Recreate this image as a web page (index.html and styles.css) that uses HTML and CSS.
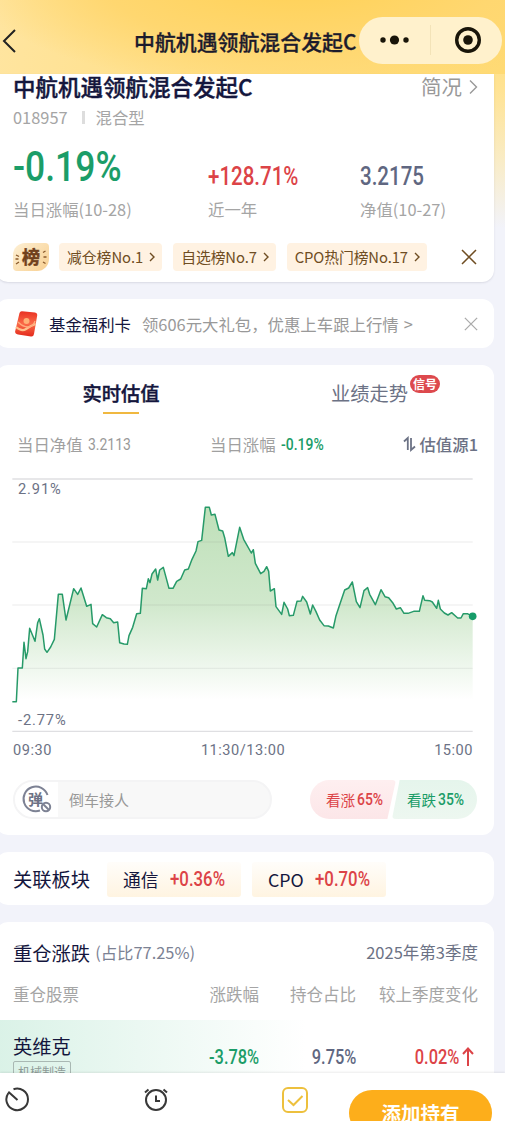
FILE: index.html
```
<!DOCTYPE html>
<html lang="zh-CN">
<head>
    <meta charset="UTF-8">
    <meta name="viewport" content="width=device-width, initial-scale=1.0">
    <title>中航机遇领航混合发起C</title>
    <link rel="stylesheet" href="styles.css">
</head>
<body>
    <header class="header">
        <svg class="back" width="16" height="26" viewBox="0 0 16 26"><path d="M14 2 3 13 14 24"/></svg>
        <h1>中航机遇领航混合发起C</h1>
        <div class="capsule">
            <svg width="142" height="46" viewBox="0 0 142 46">
                <circle cx="24" cy="23" r="2.7"/>
                <circle cx="35.5" cy="23" r="4.6"/>
                <circle cx="47" cy="23" r="2.7"/>
                <path class="split" d="M71.500 8V38"/>
                <circle class="ring" cx="109" cy="23" r="11.300"/>
                <circle cx="109" cy="23" r="4.800"/>
            </svg>
        </div>
    </header>

    <section class="card summary">
        <div class="fund-title">
            <h2>中航机遇领航混合发起C</h2>
            <a class="more">简况<svg width="9" height="16" viewBox="0 0 9 16"><path d="M1 1.500 7.500 8 1 14.500"/></svg></a>
        </div>
        <div class="fund-code"><span>018957</span><i></i><span>混合型</span></div>
        <div class="figures">
            <div>
                <div class="value"><b class="num big green">-0.19%</b></div>
                <p>当日涨幅(10-28)</p>
            </div>
            <div>
                <div class="value"><b class="num mid red">+128.71%</b></div>
                <p>近一年</p>
            </div>
            <div>
                <div class="value"><b class="num mid slate">3.2175</b></div>
                <p>净值(10-27)</p>
            </div>
        </div>
        <div class="ranks">
            <span class="rank-icon">
                <svg width="36" height="28" viewBox="0 0 36 28">
                    <path d="M3 12 6 13.500M2.500 16H5.500M3 21 6 19M30 9.500 32.500 8M30.500 14H33.500M30 19 32.500 20.500"/>
                    <text x="18" y="21">榜</text>
                </svg>
            </span>
            <a class="rank">减仓榜No.1<svg width="6" height="10" viewBox="0 0 6 10"><path d="M1 1 5 5 1 9"/></svg></a>
            <a class="rank">自选榜No.7<svg width="6" height="10" viewBox="0 0 6 10"><path d="M1 1 5 5 1 9"/></svg></a>
            <a class="rank">CPO热门榜No.17<svg width="6" height="10" viewBox="0 0 6 10"><path d="M1 1 5 5 1 9"/></svg></a>
            <svg class="close brown" width="16" height="16" viewBox="0 0 16 16"><path d="M1 1 15 15M15 1 1 15"/></svg>
        </div>
    </section>

    <section class="card promo">
        <svg class="packet" width="26" height="28" viewBox="0 0 26 28">
            <defs>
                <linearGradient id="packet" x1="0" y1="0" x2="0" y2="1">
                    <stop offset="0" stop-color="#e93223"/>
                    <stop offset=".5" stop-color="#fa6a48"/>
                    <stop offset="1" stop-color="#e32a1c"/>
                </linearGradient>
            </defs>
            <path fill="url(#packet)" d="M6.500 3Q7.200 1 9 1.200L22 2.500Q24.500 3 24.200 5.500L21 24Q20.500 26.800 18 26.500L5 24.500Q2 23.800 2.100 21.500Z"/>
            <path fill="none" stroke="#ffc08c" stroke-width="2.200" d="M3 17Q9 22 13 19T22.500 14"/>
            <circle cx="13.500" cy="11" r="3" fill="#ffb076"/>
            <path fill="none" stroke="#ffab7d" stroke-width="1.300" d="M5 12Q10 17 15 17T22 11"/>
        </svg>
        <span class="promo-name">基金福利卡</span>
        <span class="promo-text">领606元大礼包，优惠上车跟上行情<em>&gt;</em></span>
        <svg class="close grey" width="14" height="14" viewBox="0 0 16 16"><path d="M1 1 15 15M15 1 1 15"/></svg>
    </section>

    <section class="card trend">
        <div class="tabs">
            <div class="tab active">实时估值</div>
            <div class="tab">业绩走势<span class="badge">信号</span></div>
        </div>
        <div class="stats">
            <span class="stat">当日净值<b class="num small light">3.2113</b></span>
            <span class="stat">当日涨幅<b class="num small green">-0.19%</b></span>
            <span class="source"><svg width="13" height="16" viewBox="0 0 13 16"><path d="M1 5.500 4.800 2V14M8 2V14L12 10.500"/></svg>估值源1</span>
        </div>
        <svg class="chart" width="490" height="265" viewBox="0 0 1470 795">
            <defs>
                <linearGradient id="area" gradientUnits="userSpaceOnUse" x1="0" y1="110" x2="0" y2="690">
                    <stop offset="0" stop-color="#bfe0b9"/>
                    <stop offset=".5" stop-color="#d0e8cc"/>
                    <stop offset="1" stop-color="#fff"/>
                </linearGradient>
            </defs>
            <path class="edge" d="M37 27H1418M37 784H1418"/>
            <path fill="url(#area)" d="M37 695 49 695 54 594 67 594 72 517 78 566 83 545 89 475 105 514 113 458 118 446 129 495 134 537 141 547 152 531 163 508 175 373 187 373 198 450 221 356 233 373 243 354 260 409 273 403 278 461 290 471 307 434 319 443 331 446 341 458 353 456 359 518 372 522 382 523 387 497 398 472 410 431 421 430 427 355 439 356 445 326 450 338 456 312 467 297 473 330 479 300 490 292 507 355 519 355 530 334 542 327 554 300 565 297 576 268 588 243 594 215 605 211 616 112 628 112 634 135 645 133 657 180 668 183 674 203 685 259 697 248 702 257 719 172 731 208 754 249 760 239 766 280 782 311 792 304 800 290 806 304 811 363 823 356 828 410 845 433 852 397 863 417 868 437 880 436 891 394 903 393 908 379 920 396 931 432 938 405 948 425 959 450 972 467 985 468 1000 474 1008 437 1017 410 1034 360 1046 354 1057 336 1069 395 1080 413 1092 362 1103 353 1109 373 1126 404 1143 359 1155 380 1166 383 1178 398 1189 417 1201 413 1212 430 1224 430 1241 424 1258 424 1269 377 1274 391 1289 392 1297 396 1310 415 1315 391 1321 417 1333 429 1344 435 1355 428 1373 444 1383 444 1390 431 1402 431 1418 439V695Z"/>
            <path class="grid" d="M37 216H1418M37 405H1418M37 595H1418"/>
            <path class="line" d="M37 695 49 695 54 594 67 594 72 517 78 566 83 545 89 475 105 514 113 458 118 446 129 495 134 537 141 547 152 531 163 508 175 373 187 373 198 450 221 356 233 373 243 354 260 409 273 403 278 461 290 471 307 434 319 443 331 446 341 458 353 456 359 518 372 522 382 523 387 497 398 472 410 431 421 430 427 355 439 356 445 326 450 338 456 312 467 297 473 330 479 300 490 292 507 355 519 355 530 334 542 327 554 300 565 297 576 268 588 243 594 215 605 211 616 112 628 112 634 135 645 133 657 180 668 183 674 203 685 259 697 248 702 257 719 172 731 208 754 249 760 239 766 280 782 311 792 304 800 290 806 304 811 363 823 356 828 410 845 433 852 397 863 417 868 437 880 436 891 394 903 393 908 379 920 396 931 432 938 405 948 425 959 450 972 467 985 468 1000 474 1008 437 1017 410 1034 360 1046 354 1057 336 1069 395 1080 413 1092 362 1103 353 1109 373 1126 404 1143 359 1155 380 1166 383 1178 398 1189 417 1201 413 1212 430 1224 430 1241 424 1258 424 1269 377 1274 391 1289 392 1297 396 1310 415 1315 391 1321 417 1333 429 1344 435 1355 428 1373 444 1383 444 1390 431 1402 431 1418 439"/>
            <circle cx="1418" cy="439" r="11.500" fill="#169c69"/>
            <text x="54" y="71">2.91%</text>
            <text x="54" y="765">-2.77%</text>
        </svg>
        <div class="axis"><span>09:30</span><span>11:30/13:00</span><span>15:00</span></div>
        <div class="vote-row">
            <div class="comment">
                <span class="comment-icon">
                    <svg width="43" height="35" viewBox="0 0 43 35">
                        <path d="M32.500 13A12.300 12.300 0 1 0 25 28.500"/>
                        <text x="20.500" y="22.500">弹</text>
                        <circle cx="31" cy="25" r="4.200"/>
                        <path d="M28 22 34 28"/>
                    </svg>
                </span>
                <span>倒车接人</span>
            </div>
            <div class="vote up">看涨<b class="num small">65%</b></div>
            <div class="vote down">看跌<b class="num small">35%</b></div>
        </div>
    </section>

    <section class="card sectors">
        <h3>关联板块</h3>
        <div class="chip">通信<b class="num sector red">+0.36%</b></div>
        <div class="chip">CPO<b class="num sector red">+0.70%</b></div>
    </section>

    <section class="card holdings">
        <div class="holdings-title">
            <h3>重仓涨跌</h3>
            <span class="ratio">(占比77.25%)</span>
            <span class="season">2025年第3季度</span>
        </div>
        <div class="row head">
            <span>重仓股票</span><span>涨跌幅</span><span>持仓占比</span><span>较上季度变化</span>
        </div>
        <div class="row stock">
            <div class="stock-name">英维克<small>机械制造</small></div>
            <div><b class="num cell green">-3.78%</b></div>
            <div><b class="num cell slate">9.75%</b></div>
            <div><b class="num cell red">0.02%</b><svg width="12" height="20" viewBox="0 0 12 20"><path d="M6 19V2M1 7 6 1.500 11 7"/></svg></div>
        </div>
    </section>

    <nav class="bottom-bar">
        <svg width="26" height="26" viewBox="0 0 26 26"><path d="M9.500 3.200A10.800 10.800 0 1 1 4.300 7.200M4.300 5.800 13.500 14"/></svg>
        <svg width="26" height="26" viewBox="0 0 26 26"><circle cx="13" cy="14" r="10"/><path d="M13 9.500V15H17M2 6.500 5.500 3.500M20.500 3.500 24 6.500"/></svg>
        <svg class="check" width="28" height="28" viewBox="0 0 28 28"><rect x="2" y="2" width="24" height="24" rx="5"/><path d="M7 14 12.500 19 21.500 10"/></svg>
        <button>添加持有</button>
    </nav>
</body>
</html>
```
FILE: styles.css
```
* {
    box-sizing: border-box;
}
body {
    margin: 0;
    height: 1121px;
    position: relative;
    overflow: hidden;
    font-family: "Noto Sans CJK SC", sans-serif;
    color: #14163d;
    background: linear-gradient(180deg, #ffda6b 0, #ffe394 90px, #f9ecc6 160px, #f2f3fa 228px);
}
h1, h2, h3, p {
    margin: 0;
}
svg {
    flex: none;
    fill: none;
}
.header {
    height: 74px;
    display: flex;
    align-items: center;
    padding-top: 8px;
    background: radial-gradient(ellipse 330px 110px at 300px -20px, #ffd155 0, #ffd770 60%, rgba(255, 221, 125, 0) 100%), linear-gradient(100deg, #ffe5a0 0, #ffdd80 50%, #ffda74 100%);
}
.back {
    margin: -1px 0 0 1px;
    stroke: #222;
    stroke-width: 2;
}
.header h1 {
    margin-left: 117px;
    width: 224px;
    font-size: 20.9px;
    font-weight: 500;
    line-height: 30px;
    white-space: nowrap;
    color: #1c1b2c;
    -webkit-text-stroke: .3px #1c1b2c;
}
.capsule {
    width: 143px;
    height: 47px;
    margin: -2px 0 0 1px;
    border-radius: 24px;
    background: #fff1cc;
}
.capsule circle {
    fill: #191509;
}
.capsule .ring {
    fill: none;
    stroke: #191509;
    stroke-width: 3.4;
}
.split {
    stroke: #f3e3b8;
}
.card {
    width: 498px;
    margin: 0 0 17px -4px;
    padding: 0 16px 0 17px;
    border-radius: 12px;
    background: #fff;
}
.summary {
    height: 208px;
    border-radius: 0 0 12px 12px;
    box-shadow: 0 1px 2px rgba(80, 80, 110, .15);
}

/* condensed figures */
.num {
    display: inline-block;
    font-family: Roboto, sans-serif;
    font-weight: 500;
    transform: scaleX(.82);
    transform-origin: left center;
    white-space: nowrap;
}
.big {
    font-size: 42px;
    line-height: 44px;
    transform: scaleX(.845);
}
.mid {
    font-size: 25px;
    line-height: 28px;
}
.small {
    font-size: 17px;
    line-height: 20px;
}
.green {
    color: #1b9d68;
}
.red {
    color: #dc4347;
}
.slate {
    color: #606781;
}
.light {
    color: #999;
    font-weight: 400;
}

.fund-title {
    display: flex;
    justify-content: space-between;
    align-items: center;
    height: 24px;
}
.fund-title h2 {
    font-size: 22.5px;
    font-weight: 500;
    line-height: 24px;
    -webkit-text-stroke: .4px #14163d;
}
.more {
    display: flex;
    align-items: center;
    font-size: 20.5px;
    line-height: 24px;
    color: #999;
}
.more svg {
    margin: 1px 0 0 7px;
    stroke: #999;
    stroke-width: 1.4;
}
.fund-code {
    display: flex;
    align-items: center;
    height: 38px;
    font-size: 16.4px;
    color: #a5a5a5;
}
.fund-code i {
    width: 3px;
    height: 13px;
    margin: 0 11px 0 14px;
    background: #ddd;
}
.figures {
    display: grid;
    grid-template-columns: 195px 152px 1fr;
    height: 107px;
}
.value {
    height: 60px;
    display: flex;
    align-items: flex-end;
}
.figures > div:first-child .value {
    padding-bottom: 7px;
}
.figures > div:not(:first-child) .value {
    padding-bottom: 5px;
}
.figures p {
    font-size: 16.4px;
    line-height: 26px;
    color: #a5a5a5;
}
.ranks {
    display: flex;
    align-items: center;
    height: 28px;
}
.rank-icon {
    width: 36px;
    height: 28px;
    margin-right: 10px;
    border-radius: 12px 4px 12px 4px;
    background: linear-gradient(135deg, #fdf0d5, #f8cf90);
}
.rank-icon path {
    stroke: #8a5a2c;
    stroke-width: 1.3;
}
.rank-icon text {
    font-size: 18px;
    font-weight: 700;
    text-anchor: middle;
    fill: #70401c;
    stroke: #70401c;
    stroke-width: .5;
}
.rank {
    display: flex;
    align-items: center;
    height: 28px;
    margin-right: 11px;
    padding: 0 7px 0 8px;
    border-radius: 4px;
    background: #fff2e2;
    font-size: 14.8px;
    line-height: 26px;
    padding-bottom: 1px;
    color: #6f4d22;
    white-space: nowrap;
}
.rank:nth-of-type(2),
.rank:nth-of-type(3) {
    letter-spacing: -.1px;
}
.rank svg {
    margin-left: 6px;
    stroke: #6f4d22;
    stroke-width: 1.4;
}
.close {
    margin-left: auto;
    stroke-width: 1.5;
}
.brown {
    stroke: #6f4d22;
    margin-right: 1px;
}
.grey {
    stroke: #aaa;
}

.promo {
    display: flex;
    align-items: center;
    height: 49px;
}
.promo-name {
    margin-left: 10px;
    font-size: 16.4px;
}
.promo-text {
    margin-left: 11px;
    font-size: 16.4px;
    color: #999;
    white-space: nowrap;
}
.promo-text em {
    margin-left: 5px;
    font-style: normal;
}

.trend {
    height: 470px;
}
.tabs {
    display: flex;
    height: 60px;
    margin: 0 -16px 0 -17px;
}
.tab {
    position: relative;
    width: 250px;
    font-size: 19.3px;
    line-height: 56px;
    text-align: center;
    color: #6c7285;
}
.tab:last-child {
    width: 247px;
}
.active {
    font-weight: 500;
    color: #14163d;
    -webkit-text-stroke: .4px #14163d;
}
.active::after {
    content: "";
    position: absolute;
    left: 107px;
    bottom: 11px;
    width: 36px;
    height: 2px;
    background: #f0b840;
}
.badge {
    position: absolute;
    left: 164px;
    top: 10px;
    width: 30px;
    height: 18px;
    border-radius: 9px;
    background: #dd494d;
    color: #fff;
    font-size: 12px;
    font-weight: 700;
    line-height: 18px;
}
.stats {
    display: flex;
    align-items: center;
    height: 40px;
    padding: 0 0 3px 4px;
    font-size: 16.4px;
    color: #a0a0a0;
}
.stat {
    width: 193px;
    white-space: nowrap;
}
.stat .num {
    margin-left: 5px;
    position: relative;
    top: -1px;
}
.source {
    display: flex;
    align-items: center;
    margin-left: auto;
    font-weight: 500;
    color: #6c7285;
}
.source svg {
    margin-right: 3px;
    stroke: #6c7285;
    stroke-width: 1.8;
}
.chart {
    display: block;
    margin: 5px 0 0 -13px;
}
.chart text {
    font: 44px Roboto, sans-serif;
    letter-spacing: 2.6px;
    fill: #6c7285;
}
.edge {
    stroke: #dfdfe2;
    stroke-width: 4;
}
.grid {
    stroke: rgba(120, 130, 130, .1);
    stroke-width: 4;
}
.line {
    stroke: #279a69;
    stroke-width: 4.5;
    stroke-linejoin: round;
}
.axis {
    display: flex;
    justify-content: space-between;
    height: 30px;
    padding-right: 5px;
    font: 14.6px/30px Roboto, sans-serif;
    letter-spacing: .5px;
    color: #6c7285;
}
.vote-row {
    display: flex;
    height: 39px;
    margin-top: 15px;
}
.comment {
    display: flex;
    align-items: center;
    width: 259px;
    margin-right: 38px;
    border: 2px solid #f4f4f5;
    border-radius: 20px;
    background: #f8f8f8;
    font-size: 15px;
    color: #999;
}
.comment-icon {
    width: 43px;
    height: 35px;
    margin-right: 11px;
    border-radius: 18px 0 0 18px;
    background: #fff;
}
.comment-icon path,
.comment-icon circle {
    stroke: #7d8294;
    stroke-width: 2;
}
.comment-icon text {
    font-size: 15px;
    font-weight: 700;
    text-anchor: middle;
    fill: #6c7285;
}
.vote {
    display: flex;
    align-items: center;
    font-size: 14.6px;
    white-space: nowrap;
}
.vote .num {
    margin: -1px 0 0 2px;
}
.up {
    width: 86px;
    padding-left: 16px;
    border-radius: 20px 4px 4px 20px;
    background: linear-gradient(#feeff0, #fce6e8);
    clip-path: polygon(0 0, 100% 0, 90% 100%, 0 100%);
    color: #dc4347;
}
.down {
    width: 85px;
    margin-left: -4px;
    padding-left: 15px;
    border-radius: 4px 20px 20px 4px;
    background: linear-gradient(#e5f5ec, #edf7f0);
    clip-path: polygon(9% 0, 100% 0, 100% 100%, 0 100%);
    color: #1b9d68;
}

h3 {
    font-size: 19.3px;
    font-weight: 400;
}
.sectors {
    display: flex;
    align-items: center;
    height: 53px;
}
.sectors h3 {
    width: 94px;
}
.chip {
    display: flex;
    align-items: center;
    width: 134px;
    height: 35px;
    margin: 2px 11px 0 0;
    padding: 0 0 2px 16px;
    border-radius: 3px;
    background: linear-gradient(#fffdfa, #fff4e1);
    font-size: 17.8px;
    white-space: nowrap;
}
.sector {
    margin-left: 11px;
    font-size: 20px;
    transform: scaleX(.84);
}

.holdings {
    height: 200px;
    margin-bottom: 0;
}
.holdings-title {
    display: flex;
    align-items: center;
    height: 61px;
}
.ratio {
    margin-left: 5px;
    font-size: 16.4px;
    line-height: 24px;
    padding-bottom: 1px;
    color: #7c8294;
}
.season {
    margin-left: auto;
    font-size: 16.5px;
    line-height: 24px;
    padding-bottom: 1px;
    color: #6c7285;
}
.row {
    display: grid;
    grid-template-columns: 150px 96px 97px 122px;
}
.head {
    height: 37px;
    font-size: 16.5px;
    line-height: 23px;
    color: #a5a5a5;
}
.head span:not(:first-child),
.stock > div:not(:first-child) {
    text-align: right;
}
.stock {
    height: 80px;
    margin: 0 -16px 0 -17px;
    padding-left: 17px;
    background: linear-gradient(90deg, #daf2e7 0, #fff 310px);
}
.stock > div:not(:first-child) {
    padding-top: 24px;
}
.stock-name {
    padding-top: 12px;
    font-size: 19.3px;
    line-height: 28px;
}
.stock-name small {
    display: block;
    width: 58px;
    height: 22px;
    margin-top: 1px;
    border: 1px solid #a9b8b3;
    border-radius: 2px;
    font-size: 12px;
    line-height: 19px;
    text-align: center;
    color: #8e9b98;
}
.cell {
    font-size: 20px;
    line-height: 26px;
    transform-origin: right center;
}
.stock svg {
    margin-left: 3px;
    margin-right: 4px;
    vertical-align: -3px;
    stroke: #dc4347;
    stroke-width: 2;
}

.bottom-bar {
    position: absolute;
    left: 0;
    right: 0;
    bottom: 0;
    height: 48px;
    display: flex;
    align-items: flex-start;
    padding: 13px 13px 0 4px;
    background: #fff;
    box-shadow: 0 -1px 2px rgba(0, 0, 0, .08);
}
.bottom-bar svg {
    margin-right: 113px;
    stroke: #383838;
    stroke-width: 2;
}
.bottom-bar .check {
    margin: 0 40px 0 -1px;
    stroke: #edc03d;
}
.bottom-bar button {
    width: 144px;
    height: 46px;
    margin-top: 4px;
    padding: 0;
    border: none;
    border-radius: 24px;
    background: #fdae1b;
    color: #fff;
    font: 700 19.5px/44px "Noto Sans CJK SC", sans-serif;
}
```
